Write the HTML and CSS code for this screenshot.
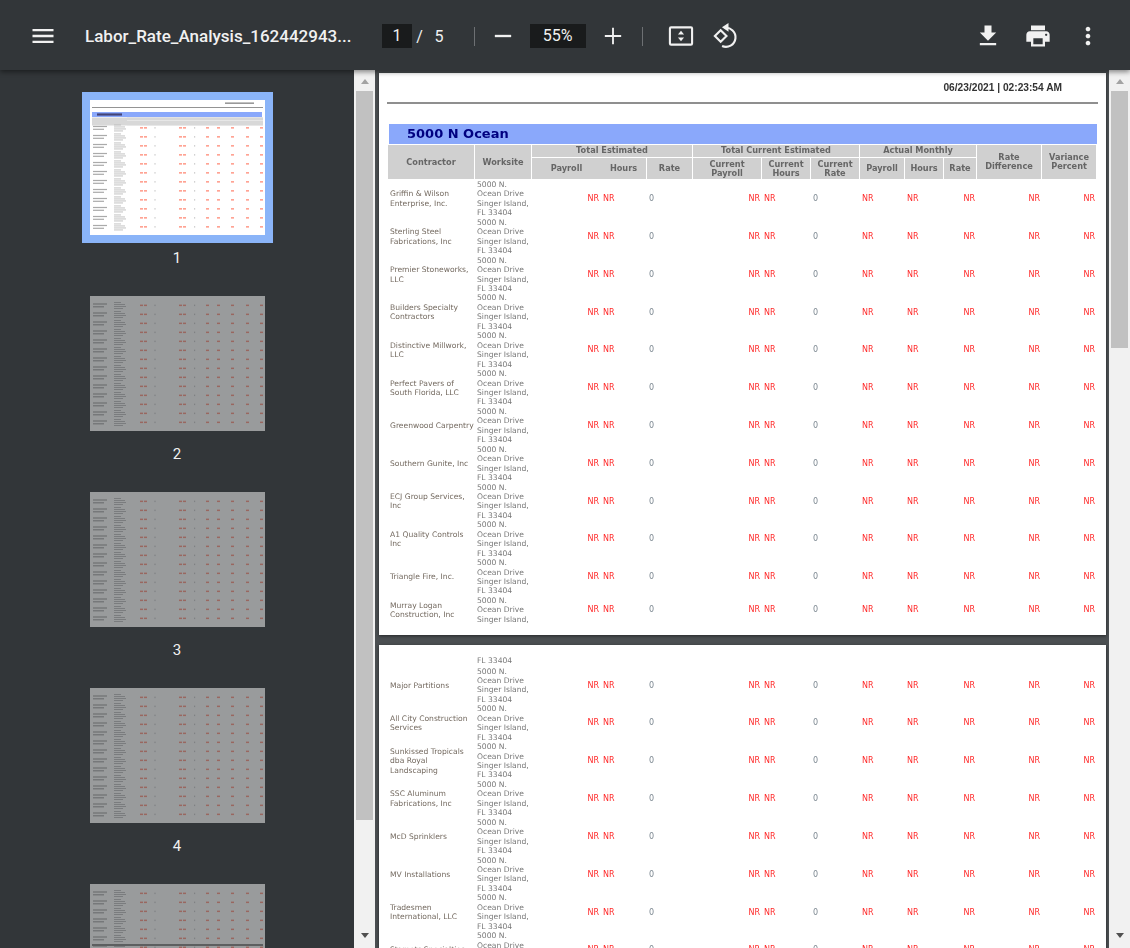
FILE: index.html
```html
<!DOCTYPE html>
<html lang="en">
<head>
  <meta charset="UTF-8">
  <title>Labor_Rate_Analysis</title>
  <meta name="viewport" content="width=device-width, initial-scale=1.0">
  <link rel="stylesheet" href="styles.css">
</head>
<body>

  <svg class="defs" xmlns="http://www.w3.org/2000/svg">
    <symbol id="thumb-row" viewBox="0 0 175 9" width="175" height="9">
      <rect x="3" y="2.4" width="14" height="1.2" fill="#aaa"/>
      <rect x="3" y="5.2" width="11" height="1.2" fill="#aaa"/>
      <rect x="24" y="1" width="7" height=".9" fill="#bbb"/>
      <rect x="24" y="3" width="11" height=".9" fill="#bbb"/>
      <rect x="24" y="5" width="12" height=".9" fill="#bbb"/>
      <rect x="24" y="7" width="9" height=".9" fill="#bbb"/>
      <g fill="#f98">
        <rect x="50" y="3.6" width="3" height="1.5"/>
        <rect x="54" y="3.6" width="3" height="1.5"/>
        <rect x="89" y="3.6" width="3" height="1.5"/>
        <rect x="93" y="3.6" width="3" height="1.5"/>
        <rect x="116" y="3.6" width="3" height="1.5"/>
        <rect x="127" y="3.6" width="3" height="1.5"/>
        <rect x="141" y="3.6" width="3" height="1.5"/>
        <rect x="156" y="3.6" width="3" height="1.5"/>
        <rect x="170" y="3.6" width="3" height="1.5"/>
      </g>
      <rect x="64.4" y="3.6" width="1.2" height="1.5" fill="#ccc"/>
      <rect x="104" y="3.6" width="1.2" height="1.5" fill="#ccc"/>
    </symbol>
    <g id="thumb-list">
      <use href="#thumb-row" y="5"/>
      <use href="#thumb-row" y="14"/>
      <use href="#thumb-row" y="23"/>
      <use href="#thumb-row" y="32"/>
      <use href="#thumb-row" y="41"/>
      <use href="#thumb-row" y="50"/>
      <use href="#thumb-row" y="59"/>
      <use href="#thumb-row" y="68"/>
      <use href="#thumb-row" y="77"/>
      <use href="#thumb-row" y="86"/>
      <use href="#thumb-row" y="95"/>
      <use href="#thumb-row" y="104"/>
      <use href="#thumb-row" y="113"/>
      <use href="#thumb-row" y="122"/>
    </g>
  </svg>

  <div id="toolbar">
    <svg class="icon" viewBox="0 0 24 24"><path d="M3 18h18v-2H3v2zm0-5h18v-2H3v2zm0-7v2h18V6H3z"/></svg>
    <div class="title">Labor_Rate_Analysis_162442943...</div>
    <div class="num-box page-box">1</div>
    <span class="slash">/</span>
    <span class="page-total">5</span>
    <div class="sep sep-first"></div>
    <svg class="icon zoom-out" viewBox="0 0 24 24"><path d="M19 13H5v-2h14v2z"/></svg>
    <div class="num-box zoom-box">55%</div>
    <svg class="icon zoom-in" viewBox="0 0 24 24"><path d="M19 12.8h-6.2V19h-1.6v-6.2H5v-1.6h6.2V5h1.6v6.2H19v1.6z"/></svg>
    <div class="sep sep-second"></div>
    <svg class="icon fit" viewBox="0 0 24 24">
      <rect class="line" x="2.5" y="4.6" width="19" height="14.8" rx="1"/>
      <path d="M12 7.4l2.6 3.3H9.4zM12 16.6l-2.6-3.3h5.2z"/>
    </svg>
    <svg class="icon rotate" viewBox="0 0 24 24">
      <path class="line" d="M8.3 7l5 5-5 5-5-5z"/>
      <path class="line" d="M11.5 5A8.2 8.2 0 1 1 9.5 20.6"/>
      <path d="M15 .8v7.6L9.4 4.6z"/>
    </svg>
    <div class="right-tools">
      <svg class="icon" viewBox="0 0 24 24"><path d="M19 9h-4V3H9v6H5l7 7 7-7zM5 18v2h14v-2H5z"/></svg>
      <svg class="icon" viewBox="0 0 24 24"><path d="M19 8H5c-1.66 0-3 1.34-3 3v6h4v4h12v-4h4v-6c0-1.66-1.34-3-3-3zm-3 11H8v-5h8v5zm3-7c-.55 0-1-.45-1-1s.45-1 1-1 1 .45 1 1-.45 1-1 1zm-1-9H6v4h12V3z"/></svg>
      <svg class="icon" viewBox="0 0 24 24"><path d="M12 8c1.1 0 2-.9 2-2s-.9-2-2-2-2 .9-2 2 .9 2 2 2zm0 2c-1.1 0-2 .9-2 2s.9 2 2 2 2-.9 2-2-.9-2-2-2zm0 6c-1.1 0-2 .9-2 2s.9 2 2 2 2-.9 2-2-.9-2-2-2z"/></svg>
    </div>
  </div>

  <div id="main">

    <div id="sidebar">
      <div class="thumb-item">
        <svg class="thumb selected" viewBox="0 0 175 135">
          <rect width="175" height="135" fill="#fff"/>
          <rect x="135" y="2.4" width="29" height="1.6" fill="#999"/>
          <rect x="2" y="7" width="171" height=".9" fill="#888"/>
          <rect x="2" y="12" width="170" height="5" fill="#8aa8fb"/>
          <rect x="7" y="13.4" width="25" height="2.2" fill="#447"/>
          <rect x="37" y="17" width="136" height="8.5" fill="#eee"/>
          <rect x="2" y="17.5" width="35" height="8" fill="#d8d8d8"/>
          <rect x="37" y="17.5" width="136" height="2.8" fill="#d8d8d8"/>
          <rect x="37" y="21" width="136" height="4.5" fill="#d8d8d8"/>
          <use href="#thumb-row" y="23.5"/>
          <use href="#thumb-row" y="32.5"/>
          <use href="#thumb-row" y="41.5"/>
          <use href="#thumb-row" y="50.5"/>
          <use href="#thumb-row" y="59.5"/>
          <use href="#thumb-row" y="68.5"/>
          <use href="#thumb-row" y="77.5"/>
          <use href="#thumb-row" y="86.5"/>
          <use href="#thumb-row" y="95.5"/>
          <use href="#thumb-row" y="104.5"/>
          <use href="#thumb-row" y="113.5"/>
          <use href="#thumb-row" y="122.5"/>
        </svg>
        <div class="thumb-label">1</div>
      </div>
      <div class="thumb-item">
        <svg class="thumb" viewBox="0 0 175 135"><rect width="175" height="135" fill="#fff"/><use href="#thumb-list"/></svg>
        <div class="thumb-label">2</div>
      </div>
      <div class="thumb-item">
        <svg class="thumb" viewBox="0 0 175 135"><rect width="175" height="135" fill="#fff"/><use href="#thumb-list"/></svg>
        <div class="thumb-label">3</div>
      </div>
      <div class="thumb-item">
        <svg class="thumb" viewBox="0 0 175 135"><rect width="175" height="135" fill="#fff"/><use href="#thumb-list"/></svg>
        <div class="thumb-label">4</div>
      </div>
      <div class="thumb-item">
        <svg class="thumb" viewBox="0 0 175 135"><rect width="175" height="135" fill="#fff"/><use href="#thumb-list"/><rect x="2" y="60" width="171" height="2" fill="#888"/></svg>
        <div class="thumb-label">5</div>
      </div>
    </div>

    <div class="scrollbar">
      <div class="arrow-up"></div>
      <div class="scroll-thumb side-thumb"></div>
      <div class="arrow-down"></div>
    </div>

    <div id="viewer">
      <div class="page first-page">
        <div class="date-line">06/23/2021 | 02:23:54 AM</div>
        <div class="rule"></div>
        <div class="site-title">5000 N Ocean</div>
        <table class="report">
          <colgroup>
            <col class="c1"><col class="c2"><col class="c3"><col class="c4"><col class="c5"><col class="c6"><col class="c7"><col class="c8"><col class="c9"><col class="c10"><col class="c11"><col class="c12"><col class="c13">
          </colgroup>
          <thead>
            <tr class="head-top">
              <th rowspan="2">Contractor</th>
              <th rowspan="2">Worksite</th>
              <th colspan="3">Total Estimated</th>
              <th colspan="3">Total Current Estimated</th>
              <th colspan="3">Actual Monthly</th>
              <th rowspan="2">Rate<br>Difference</th>
              <th rowspan="2">Variance<br>Percent</th>
            </tr>
            <tr class="head-sub">
              <th class="no-line">Payroll</th><th>Hours</th><th>Rate</th>
              <th>Current<br>Payroll</th><th>Current<br>Hours</th><th>Current<br>Rate</th>
              <th>Payroll</th><th>Hours</th><th>Rate</th>
            </tr>
          </thead>
          <tbody>
            <tr><td>Griffin &amp; Wilson<br>Enterprise, Inc.</td><td>5000 N.<br>Ocean Drive<br>Singer Island,<br>FL 33404</td><td>NR</td><td>NR</td><td>0</td><td>NR</td><td>NR</td><td>0</td><td>NR</td><td>NR</td><td>NR</td><td>NR</td><td>NR</td></tr>
            <tr><td>Sterling Steel<br>Fabrications, Inc</td><td>5000 N.<br>Ocean Drive<br>Singer Island,<br>FL 33404</td><td>NR</td><td>NR</td><td>0</td><td>NR</td><td>NR</td><td>0</td><td>NR</td><td>NR</td><td>NR</td><td>NR</td><td>NR</td></tr>
            <tr><td>Premier Stoneworks,<br>LLC</td><td>5000 N.<br>Ocean Drive<br>Singer Island,<br>FL 33404</td><td>NR</td><td>NR</td><td>0</td><td>NR</td><td>NR</td><td>0</td><td>NR</td><td>NR</td><td>NR</td><td>NR</td><td>NR</td></tr>
            <tr><td>Builders Specialty<br>Contractors</td><td>5000 N.<br>Ocean Drive<br>Singer Island,<br>FL 33404</td><td>NR</td><td>NR</td><td>0</td><td>NR</td><td>NR</td><td>0</td><td>NR</td><td>NR</td><td>NR</td><td>NR</td><td>NR</td></tr>
            <tr><td>Distinctive Millwork,<br>LLC</td><td>5000 N.<br>Ocean Drive<br>Singer Island,<br>FL 33404</td><td>NR</td><td>NR</td><td>0</td><td>NR</td><td>NR</td><td>0</td><td>NR</td><td>NR</td><td>NR</td><td>NR</td><td>NR</td></tr>
            <tr><td>Perfect Pavers of<br>South Florida, LLC</td><td>5000 N.<br>Ocean Drive<br>Singer Island,<br>FL 33404</td><td>NR</td><td>NR</td><td>0</td><td>NR</td><td>NR</td><td>0</td><td>NR</td><td>NR</td><td>NR</td><td>NR</td><td>NR</td></tr>
            <tr><td>Greenwood Carpentry</td><td>5000 N.<br>Ocean Drive<br>Singer Island,<br>FL 33404</td><td>NR</td><td>NR</td><td>0</td><td>NR</td><td>NR</td><td>0</td><td>NR</td><td>NR</td><td>NR</td><td>NR</td><td>NR</td></tr>
            <tr><td>Southern Gunite, Inc</td><td>5000 N.<br>Ocean Drive<br>Singer Island,<br>FL 33404</td><td>NR</td><td>NR</td><td>0</td><td>NR</td><td>NR</td><td>0</td><td>NR</td><td>NR</td><td>NR</td><td>NR</td><td>NR</td></tr>
            <tr><td>ECJ Group Services,<br>Inc</td><td>5000 N.<br>Ocean Drive<br>Singer Island,<br>FL 33404</td><td>NR</td><td>NR</td><td>0</td><td>NR</td><td>NR</td><td>0</td><td>NR</td><td>NR</td><td>NR</td><td>NR</td><td>NR</td></tr>
            <tr><td>A1 Quality Controls<br>Inc</td><td>5000 N.<br>Ocean Drive<br>Singer Island,<br>FL 33404</td><td>NR</td><td>NR</td><td>0</td><td>NR</td><td>NR</td><td>0</td><td>NR</td><td>NR</td><td>NR</td><td>NR</td><td>NR</td></tr>
            <tr><td>Triangle Fire, Inc.</td><td>5000 N.<br>Ocean Drive<br>Singer Island,<br>FL 33404</td><td>NR</td><td>NR</td><td>0</td><td>NR</td><td>NR</td><td>0</td><td>NR</td><td>NR</td><td>NR</td><td>NR</td><td>NR</td></tr>
            <tr><td>Murray Logan<br>Construction, Inc</td><td>5000 N.<br>Ocean Drive<br>Singer Island,</td><td>NR</td><td>NR</td><td>0</td><td>NR</td><td>NR</td><td>0</td><td>NR</td><td>NR</td><td>NR</td><td>NR</td><td>NR</td></tr>
          </tbody>
        </table>
      </div>

      <div class="page second-page">
        <table class="report">
          <colgroup>
            <col class="c1"><col class="c2"><col class="c3"><col class="c4"><col class="c5"><col class="c6"><col class="c7"><col class="c8"><col class="c9"><col class="c10"><col class="c11"><col class="c12"><col class="c13">
          </colgroup>
          <tbody>
            <tr class="cont-row"><td></td><td>FL 33404</td><td colspan="11"></td></tr>
            <tr><td>Major Partitions</td><td>5000 N.<br>Ocean Drive<br>Singer Island,<br>FL 33404</td><td>NR</td><td>NR</td><td>0</td><td>NR</td><td>NR</td><td>0</td><td>NR</td><td>NR</td><td>NR</td><td>NR</td><td>NR</td></tr>
            <tr><td>All City Construction<br>Services</td><td>5000 N.<br>Ocean Drive<br>Singer Island,<br>FL 33404</td><td>NR</td><td>NR</td><td>0</td><td>NR</td><td>NR</td><td>0</td><td>NR</td><td>NR</td><td>NR</td><td>NR</td><td>NR</td></tr>
            <tr><td>Sunkissed Tropicals<br>dba Royal<br>Landscaping</td><td>5000 N.<br>Ocean Drive<br>Singer Island,<br>FL 33404</td><td>NR</td><td>NR</td><td>0</td><td>NR</td><td>NR</td><td>0</td><td>NR</td><td>NR</td><td>NR</td><td>NR</td><td>NR</td></tr>
            <tr><td>SSC Aluminum<br>Fabrications, Inc</td><td>5000 N.<br>Ocean Drive<br>Singer Island,<br>FL 33404</td><td>NR</td><td>NR</td><td>0</td><td>NR</td><td>NR</td><td>0</td><td>NR</td><td>NR</td><td>NR</td><td>NR</td><td>NR</td></tr>
            <tr><td>McD Sprinklers</td><td>5000 N.<br>Ocean Drive<br>Singer Island,<br>FL 33404</td><td>NR</td><td>NR</td><td>0</td><td>NR</td><td>NR</td><td>0</td><td>NR</td><td>NR</td><td>NR</td><td>NR</td><td>NR</td></tr>
            <tr><td>MV Installations</td><td>5000 N.<br>Ocean Drive<br>Singer Island,<br>FL 33404</td><td>NR</td><td>NR</td><td>0</td><td>NR</td><td>NR</td><td>0</td><td>NR</td><td>NR</td><td>NR</td><td>NR</td><td>NR</td></tr>
            <tr><td>Tradesmen<br>International, LLC</td><td>5000 N.<br>Ocean Drive<br>Singer Island,<br>FL 33404</td><td>NR</td><td>NR</td><td>0</td><td>NR</td><td>NR</td><td>0</td><td>NR</td><td>NR</td><td>NR</td><td>NR</td><td>NR</td></tr>
            <tr><td>Stamets Specialties</td><td>5000 N.<br>Ocean Drive<br>Singer Island,<br>FL 33404</td><td>NR</td><td>NR</td><td>0</td><td>NR</td><td>NR</td><td>0</td><td>NR</td><td>NR</td><td>NR</td><td>NR</td><td>NR</td></tr>
          </tbody>
        </table>
      </div>
    </div>

    <div class="scrollbar">
      <div class="arrow-up"></div>
      <div class="scroll-thumb main-thumb"></div>
      <div class="arrow-down"></div>
    </div>

  </div>

</body>
</html>
```

FILE: styles.css
```css
* { box-sizing: border-box; }

html, body {
  height: 100%;
}

body {
  margin: 0;
  overflow: hidden;
  display: flex;
  flex-direction: column;
  font-family: Roboto, sans-serif;
  background: #323639;
}

.defs {
  display: none;
}

/* toolbar */

#toolbar {
  flex: 0 0 70px;
  display: flex;
  align-items: center;
  padding: 2px 28px 0 28.5px;
  background: #323639;
  color: #f1f1f1;
  box-shadow: 0 2px 5px rgba(0, 0, 0, .45);
  position: relative;
  z-index: 2;
}

.icon {
  flex: 0 0 28px;
  width: 28px;
  height: 28px;
  fill: #f1f1f1;
}

.icon .line {
  fill: none;
  stroke: #f1f1f1;
  stroke-width: 1.8;
}

.title {
  width: 272px;
  margin-left: 28.5px;
  font-size: 17px;
  font-weight: 500;
  white-space: nowrap;
}

.num-box {
  height: 24px;
  line-height: 24px;
  background: #191b1c;
  text-align: center;
  font-size: 16px;
}

.page-box {
  width: 30px;
  margin-left: 25px;
}

.slash {
  width: 12px;
  padding-left: 3px;
  text-align: center;
  font-size: 16px;
}

.page-total {
  width: 14px;
  margin-left: 8px;
  text-align: center;
  font-size: 16px;
}

.sep {
  width: 1px;
  height: 19px;
  background: #6d7073;
}

.sep-first { margin-left: 27.5px; }
.sep-second { margin-left: 15px; }

.zoom-out { margin-left: 14px; }

.zoom-box {
  width: 56px;
  margin-left: 13px;
}

.zoom-in { margin-left: 13px; }
.fit { margin-left: 24.5px; }
.rotate { margin-left: 15.5px; }

.right-tools {
  margin-left: auto;
  display: flex;
  gap: 22px;
}

/* layout below the toolbar */

#main {
  flex: 1;
  min-height: 0;
  display: flex;
}

#sidebar {
  flex: 0 0 354px;
  display: flex;
  flex-direction: column;
  align-items: center;
  gap: 28px;
  padding-top: 30px;
  overflow: hidden;
  background: #323639;
}

.thumb-item {
  display: flex;
  flex-direction: column;
  align-items: center;
}

.thumb {
  flex: 0 0 135px;
  width: 175px;
  height: 135px;
  filter: blur(.55px);
  opacity: .5;
}

.thumb.selected {
  opacity: 1;
  box-shadow: 0 0 0 8px #8ab4f8;
  filter: none;
}

.thumb.selected > * {
  filter: blur(.55px);
}

.thumb-label {
  margin-top: 13px;
  line-height: 20px;
  font-size: 15px;
  color: #f1f1f1;
}

.scrollbar {
  flex: 0 0 21px;
  display: flex;
  flex-direction: column;
  align-items: center;
  padding-top: 9px;
  background: #f1f1f1;
}

.arrow-up {
  width: 0;
  height: 0;
  border-left: 4.5px solid transparent;
  border-right: 4.5px solid transparent;
  border-bottom: 5px solid #a3a3a3;
}

.arrow-down {
  width: 0;
  height: 0;
  margin-top: auto;
  margin-bottom: 10px;
  border-left: 4.5px solid transparent;
  border-right: 4.5px solid transparent;
  border-top: 5px solid #505050;
}

.scroll-thumb {
  width: 17px;
  margin-top: 7px;
  background: #c1c1c1;
}

.side-thumb { height: 729px; }
.main-thumb { height: 257px; }

/* pdf pages */

#viewer {
  flex: 1;
  min-width: 0;
  overflow: hidden;
  display: flex;
  flex-direction: column;
  gap: 10px;
  padding: 3px 3px 0 4px;
  background: #4b4f52;
}

.page {
  flex: none;
  width: 727px;
  padding: 0 9px;
  overflow: hidden;
  background: #fff;
  box-shadow: 0 1px 3px rgba(0, 0, 0, .5);
  font-family: "DejaVu Sans", Verdana, sans-serif;
  filter: blur(.35px);
}

.first-page {
  height: 562px;
}

.second-page {
  height: 400px;
  padding-top: 10px;
}

.date-line {
  height: 29px;
  padding: 9px 35px 0 0;
  text-align: right;
  font-family: "Liberation Sans", Arial, sans-serif;
  font-size: 10.2px;
  font-weight: bold;
  color: #333;
}

.rule {
  height: 2px;
  margin: 0 -1px 20px;
  background: #8f8f8f;
}

.site-title {
  height: 20px;
  line-height: 19px;
  margin: 0 0 1px 1px;
  padding-left: 18px;
  background: #8aa8fb;
  color: #000080;
  font-size: 13px;
  font-weight: bold;
}

.report {
  width: 709px;
  table-layout: fixed;
  border-collapse: separate;
  border-spacing: 0;
  font-size: 8px;
  line-height: 9.45px;
  color: #6e6e6e;
}

.c1 { width: 87px; }
.c2 { width: 57px; }
.c3 { width: 69px; }
.c4 { width: 46px; }
.c5 { width: 46px; }
.c6 { width: 69px; }
.c7 { width: 49px; }
.c8 { width: 49px; }
.c9 { width: 45px; }
.c10 { width: 39px; }
.c11 { width: 33px; }
.c12 { width: 65px; }
.c13 { width: 55px; }

.report th {
  padding: 0;
  background: #d0d0d0;
  border-right: 1px solid #fff;
  border-bottom: 1px solid #fff;
  color: #666;
  font-size: 8.2px;
  line-height: 9px;
  font-weight: bold;
  text-align: center;
}

.report th.no-line {
  border-right: 0;
}

.head-top th {
  height: 13px;
  padding-bottom: 1px;
}

.head-top th[rowspan] {
  padding-bottom: 0;
}

.head-sub th {
  height: 22px;
}

.report td {
  padding: 0;
  vertical-align: middle;
  white-space: nowrap;
  color: #ff2a2a;
}

.report td:nth-child(1) {
  padding-left: 2px;
  font-size: 7.6px;
  color: #746a60;
}

.report td:nth-child(2) {
  padding-left: 2px;
  font-size: 7.6px;
  color: #787878;
}

.report td:nth-child(3),
.report td:nth-child(6),
.report td:nth-child(11),
.report td:nth-child(12),
.report td:nth-child(13) {
  padding-right: 2px;
  text-align: right;
}

.report td:nth-child(4),
.report td:nth-child(7),
.report td:nth-child(9),
.report td:nth-child(10) {
  padding-left: 2px;
}

.report td:nth-child(5),
.report td:nth-child(8) {
  padding-left: 2px;
  color: #7b8790;
}

.cont-row td {
  height: 11.5px;
  padding-top: 1px;
  vertical-align: top;
}
```
